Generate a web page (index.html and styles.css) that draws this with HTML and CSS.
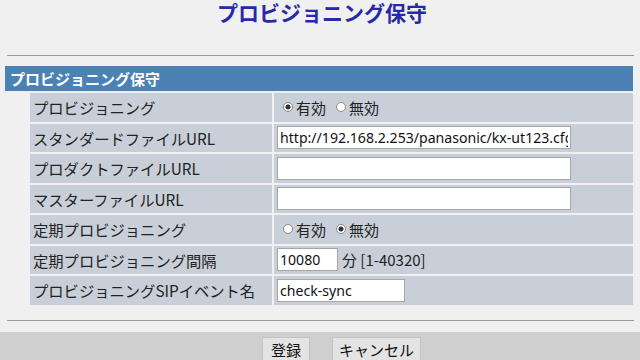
FILE: index.html
```html
<!DOCTYPE html>
<html lang="ja">
<head>
<meta charset="utf-8">
<link rel="stylesheet" href="styles.css">
</head>
<body>
<header class="page-head">
  <h1 class="title">プロビジョニング保守</h1>
</header>
<hr class="rule rule-top">
<div class="section-bar">プロビジョニング保守</div>
<div class="form">
  <div class="label">プロビジョニング</div>
  <div class="value">
    <label class="radio"><input type="radio" name="prov" checked><span>有効</span></label>
    <label class="radio"><input type="radio" name="prov"><span>無効</span></label>
  </div>
  <div class="label">スタンダードファイルURL</div>
  <div class="value"><input class="text wide" type="text" value="http://192.168.2.253/panasonic/kx-ut123.cfg"></div>
  <div class="label">プロダクトファイルURL</div>
  <div class="value"><input class="text wide" type="text" value=""></div>
  <div class="label">マスターファイルURL</div>
  <div class="value"><input class="text wide" type="text" value=""></div>
  <div class="label">定期プロビジョニング</div>
  <div class="value">
    <label class="radio"><input type="radio" name="per"><span>有効</span></label>
    <label class="radio"><input type="radio" name="per" checked><span>無効</span></label>
  </div>
  <div class="label">定期プロビジョニング間隔</div>
  <div class="value"><input class="text short" type="text" value="10080"><span class="unit">分 [1-40320]</span></div>
  <div class="label">プロビジョニングSIPイベント名</div>
  <div class="value"><input class="text mid" type="text" value="check-sync"></div>
</div>
<hr class="rule rule-bottom">
<div class="footer">
  <button class="btn btn-ok" type="button">登録</button>
  <button class="btn" type="button">キャンセル</button>
</div>
</body>
</html>
```

FILE: styles.css
```css
html, body {
  margin: 0;
  padding: 0;
  background: #f0f0f0;
  font-family: "Noto Sans CJK JP", "Noto Sans", sans-serif;
  color: #222;
}
.page-head {
  height: 26px;
  display: flex;
  align-items: center;
  justify-content: center;
  padding-left: 4px;
}
.title {
  margin: 0;
  font-size: 21px;
  line-height: 1.2;
  font-weight: bold;
  color: #2828a8;
}
.rule {
  border: 0;
  height: 0;
  border-top: 1px solid #9a9a9a;
  margin: 0 6px 0 7px;
}
.rule-top {
  margin-top: 29px;
}
.section-bar {
  margin: 10px 7px 0 5px;
  height: 25px;
  line-height: 25px;
  background: #4a82b6;
  color: #fff;
  font-size: 15px;
  font-weight: bold;
  padding-left: 5px;
}
.form {
  display: grid;
  grid-template-columns: 242px 1fr;
  grid-auto-rows: 28.5px;
  gap: 2px;
  margin: 2px 7px 0 30px;
}
.label, .value {
  background: #c9cfd8;
  display: flex;
  align-items: center;
  font-size: 15px;
}
.label {
  padding-left: 3px;
  font-size: 15.3px;
}
.value {
  padding-left: 3px;
}
.radio {
  display: inline-flex;
  align-items: center;
  margin-right: 4px;
}
.radio input {
  appearance: none;
  -webkit-appearance: none;
  width: 10px;
  height: 10px;
  margin: 0 3px 0 6px;
  border: 1px solid #8a8a8a;
  border-radius: 50%;
  background: #fff;
  box-sizing: border-box;
}
.radio input:checked {
  background: radial-gradient(circle, #333 0 2.3px, #fff 2.8px);
}
.text {
  box-sizing: border-box;
  height: 23px;
  border: 1px solid #a6a6a6;
  background: #fff;
  font-family: "Noto Sans", sans-serif;
  font-size: 14.1px;
  color: #111;
  padding: 0 2px;
  margin: 0;
  outline: none;
}
.wide { width: 294px; }
.short { width: 61px; }
.mid { width: 128px; }
.unit {
  margin-left: 4px;
  font-size: 15px;
}
.rule-bottom {
  margin-top: 15px;
}
.footer {
  margin-top: 11px;
  height: 40px;
  background: #cfcfcf;
  display: flex;
  justify-content: center;
  align-items: flex-start;
  gap: 22px;
  padding-left: 43px;
  padding-top: 5px;
  box-sizing: border-box;
}
.btn {
  font-family: "Noto Sans CJK JP", sans-serif;
  font-size: 15px;
  height: 26px;
  padding: 0 6px;
  background: #e3e3e3;
  border: 1px solid #c4c4c4;
  color: #111;
  line-height: 24px;
}
.btn-ok {
  min-width: 48px;
}
```
